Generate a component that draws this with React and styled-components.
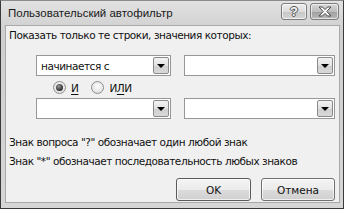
import React from 'react';
import styled, { createGlobalStyle, css } from 'styled-components';

const GlobalStyle = createGlobalStyle`
	html, body {
		margin: 0;
		padding: 0;
		background: #f0f0f0;
	}
	* {
		box-sizing: border-box;
	}
`;

const Window = styled.div`
	width: 344px;
	height: 209px;
	display: flex;
	flex-direction: column;
	border: 1px solid #3a3a3a;
	border-top-color: #8a8a8a;
	background: linear-gradient(#e2e2e2, #cfcfcf 30px, #d6d6d6);
	font-family: 'DejaVu Sans', sans-serif;
	font-size: 10.5px;
	letter-spacing: -0.45px;
	color: #111;
`;

const TitleBar = styled.div`
	height: 24px;
	display: flex;
	align-items: center;
	padding: 0 4px 0 7px;
`;

const Title = styled.div`
	flex: 1;
	font-family: 'Liberation Sans', sans-serif;
	font-size: 11.5px;
	letter-spacing: 0;
	color: #1a1a1a;
	margin-top: -1px;
`;

const TitleButtons = styled.div`
	display: flex;
	gap: 3px;
	margin-top: -4px;
`;

const CaptionButton = styled.div`
	height: 17px;
	width: ${(p) => p.$width}px;
	border: 1px solid #7c7c7c;
	border-radius: 3px;
	display: flex;
	align-items: center;
	justify-content: center;
	background: ${(p) =>
		p.$dark
			? 'linear-gradient(#d8d8d8, #bdbdbd 50%, #9f9f9f 51%, #b8b8b8)'
			: 'linear-gradient(#eeeeee, #dcdcdc 50%, #c6c6c6 51%, #d6d6d6)'};
	box-shadow: inset 0 0 0 1px rgba(255, 255, 255, 0.6);
`;

const HelpGlyph = styled.span`
	font-family: 'Liberation Sans', sans-serif;
	font-weight: bold;
	font-size: 13px;
	line-height: 1;
	letter-spacing: 0;
	color: #f4f4f4;
	text-shadow: -1px 0 #555, 1px 0 #555, 0 -1px #555, 0 1px #555;
`;

const Client = styled.div`
	flex: 1;
	margin: 0 3px 5px 4px;
	background: #f0f0f0;
	border: 1px solid #a9a9a9;
	padding: 3px 4px 0 3px;
	display: flex;
	flex-direction: column;
`;

const Label = styled.div`
	height: 13px;
	line-height: 13px;
	white-space: nowrap;
`;

const ComboRow = styled.div`
	display: flex;
	gap: 13px;
	padding-left: 27px;
	margin-top: ${(p) => p.$top}px;
`;

const Combo = styled.div`
	width: ${(p) => p.$width}px;
	height: 21px;
	border: 1px solid #979797;
	background: #fff;
	display: flex;
	align-items: center;
	padding: 1px;
`;

const ComboText = styled.div`
	flex: 1;
	padding-left: 3px;
	white-space: nowrap;
`;

const DropButton = styled.div`
	width: 16px;
	height: 17px;
	border: 1px solid #8a8a8a;
	border-radius: 2px;
	background: linear-gradient(#f2f2f2, #e2e2e2 50%, #cfcfcf 51%, #d9d9d9);
	display: flex;
	align-items: center;
	justify-content: center;
`;

const Arrow = styled.div`
	width: 0;
	height: 0;
	border-left: 4px solid transparent;
	border-right: 4px solid transparent;
	border-top: 4px solid #000;
	margin-top: 1px;
`;

const RadioRow = styled.div`
	display: flex;
	align-items: center;
	gap: 13px;
	padding-left: 44px;
	height: 13px;
	margin-top: 5px;
`;

const RadioLabel = styled.label`
	display: flex;
	align-items: center;
	gap: 5px;
`;

const RadioCircle = styled.span`
	width: 13px;
	height: 13px;
	border-radius: 50%;
	border: 1px solid #8e8e8e;
	background: radial-gradient(circle at 50% 40%, #fdfdfd, #d6d6d6);
	display: flex;
	align-items: center;
	justify-content: center;
	${(p) =>
		p.$checked &&
		css`
			&::after {
				content: '';
				width: 7px;
				height: 7px;
				border-radius: 50%;
				background: radial-gradient(circle at 40% 35%, #9a9a9a, #2a2a2a 70%);
			}
		`}
`;

const Underline = styled.span`
	text-decoration: underline;
	text-underline-offset: 2px;
`;

const Hints = styled.div`
	margin-top: 17px;
	display: flex;
	flex-direction: column;
	gap: 6px;
`;

const Footer = styled.div`
	display: flex;
	justify-content: flex-end;
	gap: 10px;
	margin-top: 10px;
`;

const Button = styled.div`
	width: ${(p) => p.$width}px;
	height: 23px;
	border: 1px solid ${(p) => (p.$default ? '#5a5a5a' : '#707070')};
	border-radius: 3px;
	background: linear-gradient(#f4f4f4, #ebebeb 50%, #dcdcdc 51%, #cfcfcf);
	box-shadow: inset 0 0 0 1px rgba(255, 255, 255, 0.7);
	display: flex;
	align-items: center;
	justify-content: center;
	letter-spacing: 0;
`;

function CloseGlyph() {
	return (
		<svg width="14" height="11" viewBox="0 0 14 11">
			<path
				d="M1 1h3.5L7 3.6 9.5 1H13L8.8 5.5 13 10H9.5L7 7.4 4.5 10H1l4.2-4.5z"
				fill="#fafafa"
				stroke="#4a4a4a"
				strokeWidth="1"
				strokeLinejoin="round"
			/>
		</svg>
	);
}

function ComboBox({ width, value }) {
	return (
		<Combo $width={width}>
			<ComboText>{value}</ComboText>
			<DropButton>
				<Arrow />
			</DropButton>
		</Combo>
	);
}

export default function App() {
	return (
		<>
			<GlobalStyle />
			<Window>
				<TitleBar>
					<Title>Пользовательский автофильтр</Title>
					<TitleButtons>
						<CaptionButton $width={26}>
							<HelpGlyph>?</HelpGlyph>
						</CaptionButton>
						<CaptionButton $width={29} $dark>
							<CloseGlyph />
						</CaptionButton>
					</TitleButtons>
				</TitleBar>

				<Client>
					<Label>Показать только те строки, значения которых:</Label>

					<ComboRow $top={13}>
						<ComboBox width={136} value="начинается с" />
						<ComboBox width={152} />
					</ComboRow>

					<RadioRow>
						<RadioLabel>
							<RadioCircle $checked />
							<Underline>И</Underline>
						</RadioLabel>
						<RadioLabel>
							<RadioCircle />
							<span>
								И<Underline>Л</Underline>И
							</span>
						</RadioLabel>
					</RadioRow>

					<ComboRow $top={4}>
						<ComboBox width={136} />
						<ComboBox width={152} />
					</ComboRow>

					<Hints>
						<Label>Знак вопроса "?" обозначает один любой знак</Label>
						<Label>Знак "*" обозначает последовательность любых знаков</Label>
					</Hints>

					<Footer>
						<Button $width={75} $default>
							OK
						</Button>
						<Button $width={74}>Отмена</Button>
					</Footer>
				</Client>
			</Window>
		</>
	);
}
